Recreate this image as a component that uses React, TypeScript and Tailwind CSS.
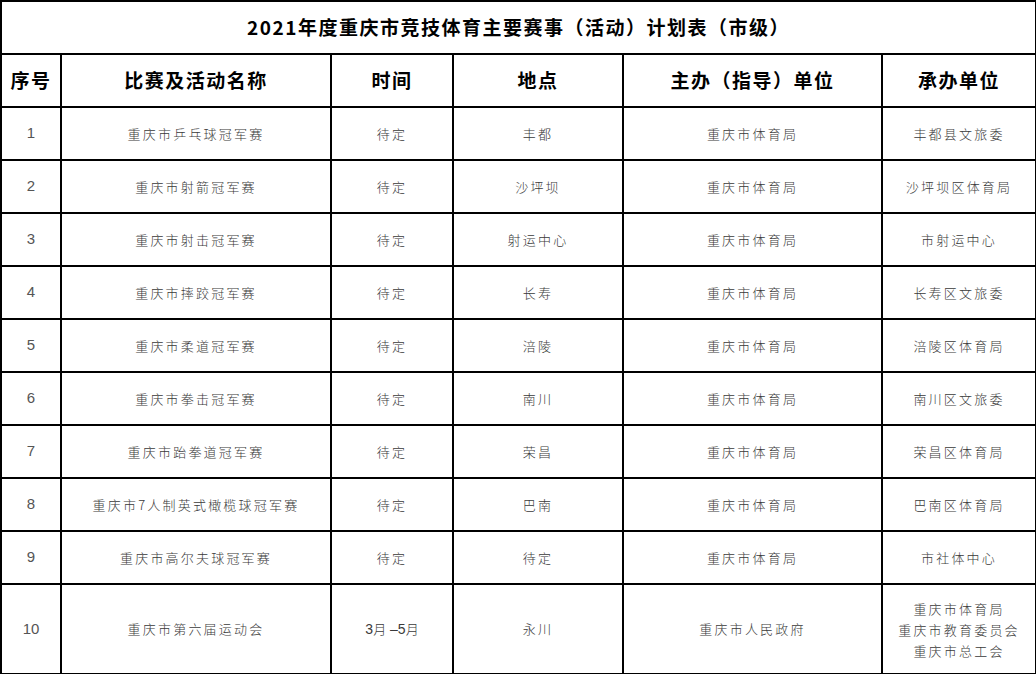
const cjk = "font-['Noto_Sans_CJK_SC','Noto_Sans',sans-serif]"

type Row = {
  no: string
  name: string
  time: string
  place: string
  host: string
  org: string[]
}

const rows: Row[] = [
  { no: '1', name: '重庆市乒乓球冠军赛', time: '待定', place: '丰都', host: '重庆市体育局', org: ['丰都县文旅委'] },
  { no: '2', name: '重庆市射箭冠军赛', time: '待定', place: '沙坪坝', host: '重庆市体育局', org: ['沙坪坝区体育局'] },
  { no: '3', name: '重庆市射击冠军赛', time: '待定', place: '射运中心', host: '重庆市体育局', org: ['市射运中心'] },
  { no: '4', name: '重庆市摔跤冠军赛', time: '待定', place: '长寿', host: '重庆市体育局', org: ['长寿区文旅委'] },
  { no: '5', name: '重庆市柔道冠军赛', time: '待定', place: '涪陵', host: '重庆市体育局', org: ['涪陵区体育局'] },
  { no: '6', name: '重庆市拳击冠军赛', time: '待定', place: '南川', host: '重庆市体育局', org: ['南川区文旅委'] },
  { no: '7', name: '重庆市跆拳道冠军赛', time: '待定', place: '荣昌', host: '重庆市体育局', org: ['荣昌区体育局'] },
  { no: '8', name: '重庆市7人制英式橄榄球冠军赛', time: '待定', place: '巴南', host: '重庆市体育局', org: ['巴南区体育局'] },
  { no: '9', name: '重庆市高尔夫球冠军赛', time: '待定', place: '待定', host: '重庆市体育局', org: ['市社体中心'] },
]

const head = ['序号', '比赛及活动名称', '时间', '地点', '主办（指导）单位', '承办单位']

export default function App() {
  const td = 'border-2 border-black text-center align-middle p-0'
  const body = 'text-[13px] font-light text-[#3a3a3a] tracking-[2.2px]'
  const num = "text-[15px] text-[#555] font-['Liberation_Sans',sans-serif]"

  return (
    <div className={`w-[1036px] h-[674px] bg-white overflow-hidden ${cjk}`}>
      <table className="w-[1035px] table-fixed border-collapse">
        <colgroup>
          <col className="w-[60px]" />
          <col className="w-[270px]" />
          <col className="w-[122px]" />
          <col className="w-[170px]" />
          <col className="w-[259px]" />
          <col className="w-[154px]" />
        </colgroup>
        <tbody>
          <tr className="h-[53px]">
            <td colSpan={6} className={`${td} text-[19px] font-bold text-black tracking-[1.5px]`}>
              2021年度重庆市竞技体育主要赛事（活动）计划表（市级）
            </td>
          </tr>
          <tr className="h-[53px]">
            {head.map((h) => (
              <td key={h} className={`${td} text-[19px] font-bold text-black tracking-[1.5px]`}>
                {h}
              </td>
            ))}
          </tr>
          {rows.map((r) => (
            <tr key={r.no} className="h-[53px]">
              <td className={`${td} ${num}`}>{r.no}</td>
              <td className={`${td} ${body}`}>{r.name}</td>
              <td className={`${td} ${body}`}>{r.time}</td>
              <td className={`${td} ${body}`}>{r.place}</td>
              <td className={`${td} ${body}`}>{r.host}</td>
              <td className={`${td} ${body}`}>{r.org[0]}</td>
            </tr>
          ))}
          <tr className="h-[90px]">
            <td className={`${td} ${num}`}>10</td>
            <td className={`${td} ${body}`}>重庆市第六届运动会</td>
            <td className={`${td} text-[13px] font-light text-[#3a3a3a]`}>
              <span className="font-['Liberation_Sans',sans-serif] text-[14px]">3</span>月
              <span className="font-['Liberation_Sans',sans-serif] text-[14px]"> –5</span>月
            </td>
            <td className={`${td} ${body}`}>永川</td>
            <td className={`${td} ${body}`}>重庆市人民政府</td>
            <td className={`${td} ${body} leading-[21px]`}>
              <div>重庆市体育局</div>
              <div>重庆市教育委员会</div>
              <div>重庆市总工会</div>
            </td>
          </tr>
        </tbody>
      </table>
    </div>
  )
}
